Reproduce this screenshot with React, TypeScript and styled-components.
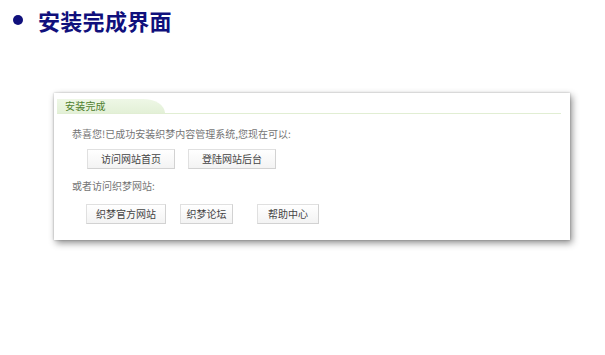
import React from "react";
import styled, { createGlobalStyle } from "styled-components";

const Global = createGlobalStyle`
  html, body { margin: 0; padding: 0; background: #fff; }
  body { font-family: "Noto Sans CJK SC", "Noto Sans", sans-serif; }
`;

const Page = styled.div`
  width: 605px;
  height: 355px;
  overflow: hidden;
  background: #fff;
`;

const TitleBar = styled.div`
  display: flex;
  align-items: center;
  gap: 15px;
  padding: 5px 0 0 13px;
  height: 30px;
`;

const Bullet = styled.span`
  width: 10px;
  height: 10px;
  border-radius: 50%;
  background: #10107c;
  margin-top: -1px;
`;

const Title = styled.h1`
  margin: 0;
  font-size: 22px;
  line-height: 30px;
  font-weight: 700;
  color: #10107c;
  letter-spacing: 0.3px;
`;

const Panel = styled.div`
  margin: 58px 0 0 54px;
  width: 516px;
  height: 147px;
  box-sizing: border-box;
  background: #fff;
  box-shadow: 2px 3px 7px rgba(0, 0, 0, 0.45), 0 0 2px rgba(0, 0, 0, 0.25);
  display: flex;
  flex-direction: column;
`;

const TabBar = styled.div`
  margin: 6px 9px 0 3px;
  border-bottom: 1px solid #e1eed3;
  display: flex;
`;

const Tab = styled.div`
  width: 100px;
  height: 14px;
  padding-left: 8px;
  font-size: 10px;
  line-height: 14px;
  color: #4f7f2e;
  background: linear-gradient(to bottom, #eef7e6, #e3f0d7);
  border-top-right-radius: 22px 14px;
  letter-spacing: 0.2px;
`;

const Body = styled.div`
  padding: 0 0 0 18px;
`;

const Line = styled.p<{ $mt: number }>`
  margin: ${(p) => p.$mt}px 0 0;
  font-size: 10px;
  line-height: 14px;
  color: #757575;
`;

const Row = styled.div<{ $mt: number; $pl: number; $gap: number }>`
  display: flex;
  margin-top: ${(p) => p.$mt}px;
  padding-left: ${(p) => p.$pl}px;
  gap: ${(p) => p.$gap}px;
`;

const Button = styled.div<{ $w: number; $ml?: number }>`
  width: ${(p) => p.$w}px;
  height: 20px;
  box-sizing: border-box;
  margin-left: ${(p) => p.$ml ?? 0}px;
  border: 1px solid #e0e0e0;
  border-right-color: #d2d2d2;
  border-bottom-color: #d2d2d2;
  background: linear-gradient(to bottom, #ffffff, #f3f3f3);
  font-size: 10px;
  line-height: 18px;
  color: #444;
  text-align: center;
`;

export default function App() {
  return (
    <Page>
      <Global />
      <TitleBar>
        <Bullet />
        <Title>安装完成界面</Title>
      </TitleBar>
      <Panel>
        <TabBar>
          <Tab>安装完成</Tab>
        </TabBar>
        <Body>
          <Line $mt={13}>恭喜您!已成功安装织梦内容管理系统,您现在可以:</Line>
          <Row $mt={8} $pl={15} $gap={13}>
            <Button $w={88}>访问网站首页</Button>
            <Button $w={88}>登陆网站后台</Button>
          </Row>
          <Line $mt={10}>或者访问织梦网站:</Line>
          <Row $mt={11} $pl={14} $gap={14}>
            <Button $w={80}>织梦官方网站</Button>
            <Button $w={53}>织梦论坛</Button>
            <Button $w={62} $ml={10}>帮助中心</Button>
          </Row>
        </Body>
      </Panel>
    </Page>
  );
}
